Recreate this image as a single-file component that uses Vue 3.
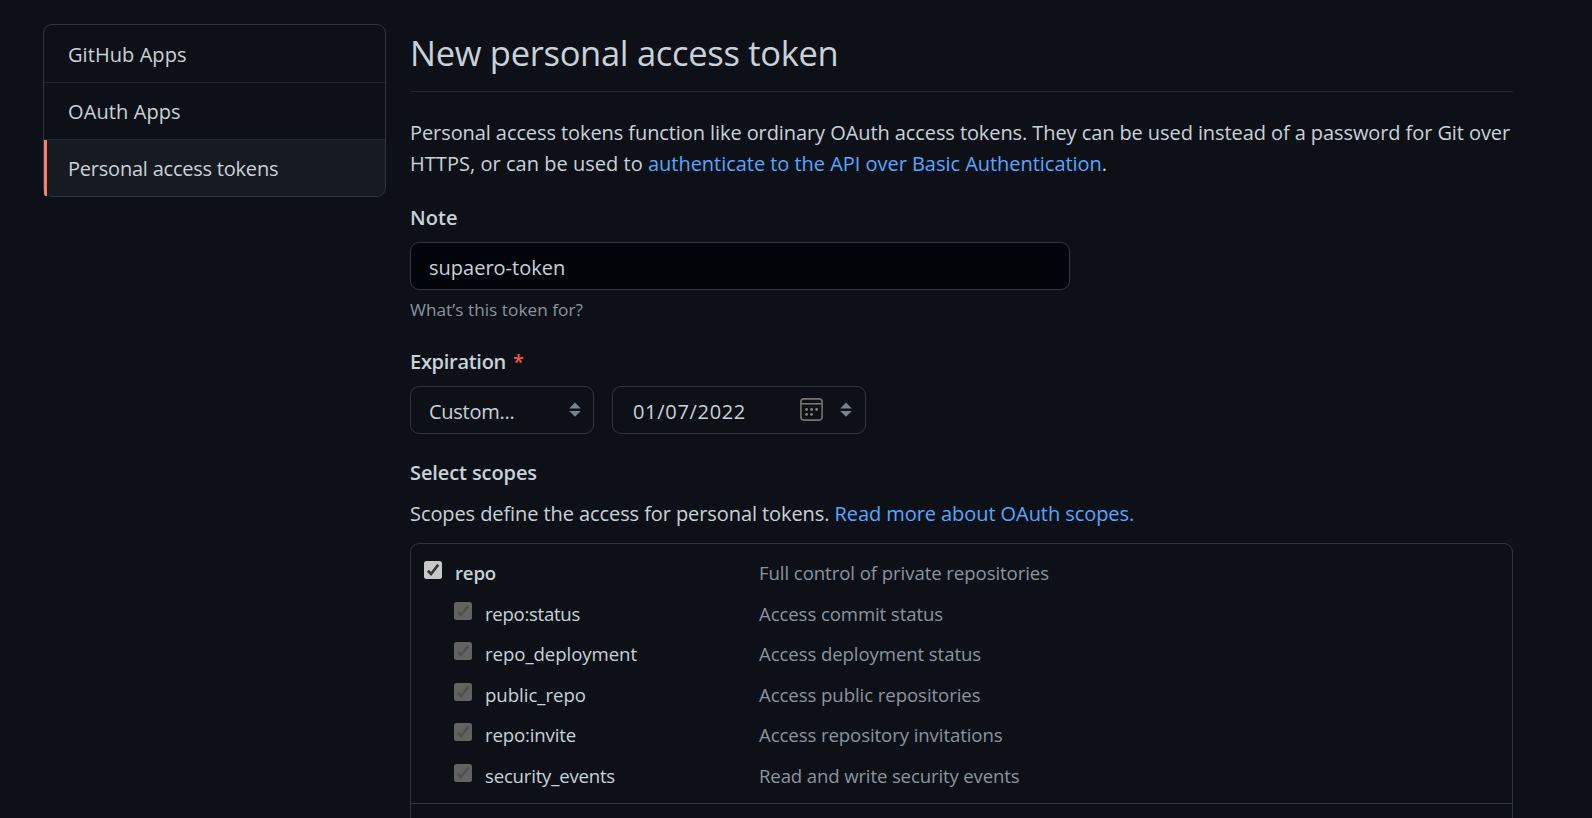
<script setup>
const menu = [
  { label: 'GitHub Apps', spacing: 0.07 },
  { label: 'OAuth Apps', spacing: 0.1 },
  { label: 'Personal access tokens', spacing: -0.22, active: true },
]

const parent = { name: 'repo', spacing: -0.168, text: 'Full control of private repositories', textSpacing: -0.074, parent: true }
const scopes = [
  parent,
  { name: 'repo:status', spacing: -0.291, text: 'Access commit status', textSpacing: -0.098 },
  { name: 'repo_deployment', spacing: -0.055, text: 'Access deployment status', textSpacing: -0.091 },
  { name: 'public_repo', spacing: -0.018, text: 'Access public repositories', textSpacing: -0.075 },
  { name: 'repo:invite', spacing: -0.149, text: 'Access repository invitations', textSpacing: -0.09 },
  { name: 'security_events', spacing: -0.204, text: 'Read and write security events', textSpacing: -0.14 },
]
const track = (n) => ({ letterSpacing: n + 'px' })
</script>

<template>
  <div class="page">
    <nav class="menu">
      <a v-for="m in menu" :key="m.label" class="menu-item" :class="{ active: m.active }">
        <span :style="track(m.spacing)">{{ m.label }}</span>
      </a>
    </nav>

    <main class="content">
      <h1 class="title">New personal access token</h1>

      <p class="intro">
        <span class="intro-a">Personal access tokens function like ordinary OAuth access tokens. They can be used instead of a password for Git over</span><br />
        <span class="intro-b">HTTPS, or can be used to </span><a class="link intro-c">authenticate to the API over Basic Authentication</a>.
      </p>

      <div class="label note">Note</div>
      <div class="input">supaero-token</div>
      <div class="hint">What’s this token for?</div>

      <div class="label expiration"><span class="exp-word">Expiration</span><span class="star">*</span></div>
      <div class="selects">
        <div class="select custom">
          <span class="custom-text">Custom...</span>
          <svg class="arrows" width="12" height="16" viewBox="0 0 12 16"><path d="M6 0.6 11.8 6.4H0.2zM0.2 9H11.8L6 14.8z" fill="#768390" /></svg>
        </div>
        <div class="select date">
          <span class="date-text">01/07/2022</span>
          <svg class="calendar" width="23" height="23" viewBox="0 0 23 23" fill="none">
            <rect x="0.9" y="0.9" width="21.2" height="21.2" rx="3" stroke="#74736f" stroke-width="1.6" />
            <path d="M1 5.8H22" stroke="#74736f" stroke-width="1.6" />
            <g fill="#85847f">
              <circle cx="6.6" cy="11.5" r="1.4" /><circle cx="11.6" cy="11.5" r="1.4" /><circle cx="16.6" cy="11.5" r="1.4" />
              <circle cx="6.6" cy="16.4" r="1.4" /><circle cx="11.6" cy="16.4" r="1.4" />
            </g>
          </svg>
          <svg class="arrows" width="12" height="16" viewBox="0 0 12 16"><path d="M6 0.6 11.8 6.4H0.2zM0.2 9H11.8L6 14.8z" fill="#768390" /></svg>
        </div>
      </div>

      <div class="label scopes-label">Select scopes</div>
      <p class="scopes-intro"><span class="si-a">Scopes define the access for personal tokens. </span><a class="link si-b">Read more about OAuth scopes.</a></p>

      <div class="scopes">
        <div class="scope-group">
          <div v-for="s in scopes" :key="s.name" class="scope" :class="s.parent ? 'root' : 'sub'">
            <div class="scope-name">
              <svg class="check" width="18" height="18" viewBox="0 0 18 18">
                <rect class="check-box" width="18" height="18" rx="2.5" />
                <path class="check-mark" d="M3.8 9.7 7.1 13 14.2 3.8" fill="none" stroke-width="2.7" />
              </svg>
              <span :style="track(s.spacing)">{{ s.name }}</span>
            </div>
            <span class="scope-text" :style="track(s.textSpacing)">{{ s.text }}</span>
          </div>
        </div>
      </div>
    </main>
  </div>
</template>

<style>
body { background: #0d1117; overflow: hidden; }
</style>

<style scoped>
* { box-sizing: border-box; }
.page {
  display: flex;
  align-items: flex-start;
  gap: 24px;
  height: 818px;
  padding: 24px 79px 0 43px;
  overflow: hidden;
  background: #0d1117;
  color: #c9d1d9;
  font: 20px/31px "Open Sans", "Noto Sans", sans-serif;
  white-space: pre;
}
h1, p { margin: 0; font-weight: 400; }
.menu {
  display: flex;
  flex-direction: column;
  width: 343px;
  border: 1px solid #30363d;
  border-radius: 9px;
}
.menu-item {
  display: block;
  height: 57px;
  padding-left: 24px;
  line-height: 58px;
  border-bottom: 1px solid #21262d;
}
.menu-item:first-child { height: 58px; line-height: 60px; }
.menu-item.active {
  height: 56px;
  padding-left: 21px;
  border-left: 3px solid #f78166;
  border-bottom: 0;
  border-radius: 0 0 8px 2px;
  background: #161b22;
}
.content { width: 1103px; }
.title {
  height: 68px;
  padding-bottom: 10px;
  border-bottom: 1px solid #21262d;
  font-size: 34.5px;
  line-height: 57px;
  letter-spacing: -0.3px;
}
.intro { margin-top: 25px; white-space: normal; }
.intro span { white-space: pre; }
.intro-a { letter-spacing: -0.085px; }
.intro-b { letter-spacing: 0.033px; }
.intro-c { letter-spacing: -0.035px; }
.link { color: #58a6ff; }
.label { font-weight: 600; }
.note { margin-top: 23px; letter-spacing: 0.1px; }
.input {
  width: 660px;
  height: 48px;
  margin-top: 9px;
  padding-left: 18px;
  border: 1px solid #30363d;
  border-radius: 9px;
  background: #010409;
  line-height: 49px;
}
.hint {
  margin-top: 7px;
  color: #8b949e;
  font-size: 17.2px;
  line-height: 26px;
  letter-spacing: 0.043px;
}
.expiration { display: flex; gap: 7px; margin-top: 23px; }
.exp-word { letter-spacing: -0.284px; }
.star { color: #f85149; }
.selects { display: flex; gap: 18px; margin-top: 9px; }
.select {
  display: flex;
  align-items: center;
  height: 48px;
  padding: 0 13px 0 18px;
  border: 1px solid #30363d;
  border-radius: 9px;
  line-height: 46px;
}
.custom { width: 184px; padding-right: 12px; }
.date { width: 254px; padding-left: 20px; }
.custom-text { padding-top: 4px; letter-spacing: -0.26px; }
.date-text { padding-top: 4px; letter-spacing: 0.684px; }
.arrows { margin-left: auto; }
.calendar { margin: 0 0 1px auto; }
.date .arrows { margin-left: 17px; }
.scopes-label { margin-top: 23px; letter-spacing: -0.096px; }
.scopes-intro { margin-top: 10px; }
.si-a { letter-spacing: -0.085px; }
.si-b { letter-spacing: -0.07px; }
.scopes {
  height: 300px;
  margin-top: 14px;
  border: 1px solid #30363d;
  border-radius: 9px 9px 0 0;
}
.scope-group {
  height: 260px;
  padding: 8px 12px 0 13px;
  border-bottom: 1px solid #30363d;
  font-size: 18.6px;
}
.scope { display: flex; height: 41px; line-height: 41px; }
.scope:nth-child(even) { height: 40px; }
.scope-name { display: flex; width: 335px; gap: 13px; flex: none; }
.sub .scope-name { padding-left: 30px; }
.root .scope-name { font-weight: 600; }
.check { flex: none; margin-top: 9px; }
.check-box { fill: #c8c8c8; }
.check-mark { stroke: #363636; }
.sub .check-box { fill: #626262; }
.sub .check-mark { stroke: #505050; }
.scope-text { color: #8b949e; }
</style>
